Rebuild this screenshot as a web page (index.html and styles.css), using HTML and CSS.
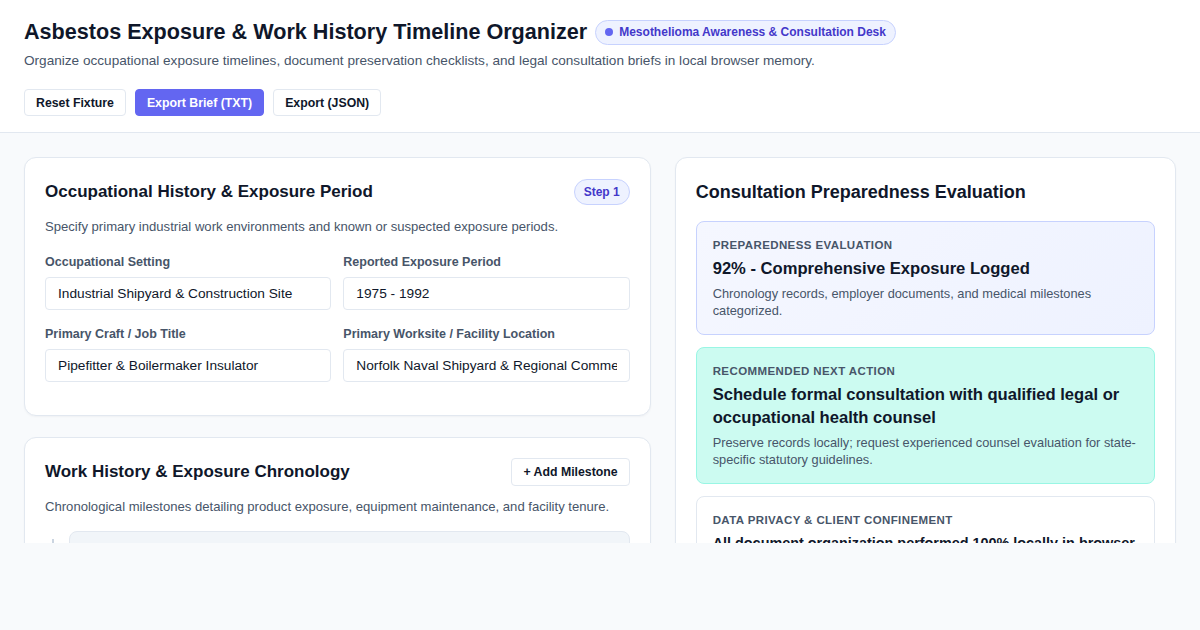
FILE: index.html
```html
<!DOCTYPE html>
<html lang="en">
<head>
    <meta charset="UTF-8">
    <meta name="viewport" content="width=device-width, initial-scale=1.0">
    <title>Asbestos Exposure &amp; Work History Timeline Organizer</title>
    <link rel="stylesheet" href="styles.css">
</head>
<body>
    <header class="app-header">
        <div class="title-row">
            <h1>Asbestos Exposure &amp; Work History Timeline Organizer</h1>
            <span class="desk-badge"><span class="dot"></span>Mesothelioma Awareness &amp; Consultation Desk</span>
        </div>
        <p class="subtitle">Organize occupational exposure timelines, document preservation checklists, and legal consultation briefs in local browser memory.</p>
        <div class="actions">
            <button type="button" class="btn">Reset Fixture</button>
            <button type="button" class="btn btn-primary">Export Brief (TXT)</button>
            <button type="button" class="btn">Export (JSON)</button>
        </div>
    </header>

    <main class="workspace">
        <div class="column">
            <section class="card">
                <div class="card-head">
                    <h2>Occupational History &amp; Exposure Period</h2>
                    <span class="step">Step 1</span>
                </div>
                <p class="card-desc">Specify primary industrial work environments and known or suspected exposure periods.</p>
                <div class="field-grid">
                    <div class="field">
                        <label for="setting">Occupational Setting</label>
                        <input type="text" id="setting" value="Industrial Shipyard &amp; Construction Site">
                    </div>
                    <div class="field">
                        <label for="period">Reported Exposure Period</label>
                        <input type="text" id="period" value="1975 - 1992">
                    </div>
                    <div class="field">
                        <label for="craft">Primary Craft / Job Title</label>
                        <input type="text" id="craft" value="Pipefitter &amp; Boilermaker Insulator">
                    </div>
                    <div class="field">
                        <label for="site">Primary Worksite / Facility Location</label>
                        <input type="text" id="site" value="Norfolk Naval Shipyard &amp; Regional Commercial Facilities">
                    </div>
                </div>
            </section>

            <section class="card">
                <div class="card-head">
                    <h2>Work History &amp; Exposure Chronology</h2>
                    <button type="button" class="btn btn-small">+ Add Milestone</button>
                </div>
                <p class="card-desc">Chronological milestones detailing product exposure, equipment maintenance, and facility tenure.</p>
                <div class="timeline">
                    <div class="milestone">
                        <div class="milestone-title">1975 - Shipyard apprenticeship begins</div>
                    </div>
                </div>
            </section>
        </div>

        <aside class="card">
            <h2 class="side-title">Consultation Preparedness Evaluation</h2>
            <div class="eval-box eval-score">
                <div class="eval-label">Preparedness Evaluation</div>
                <div class="eval-heading">92% - Comprehensive Exposure Logged</div>
                <p class="eval-text">Chronology records, employer documents, and medical milestones categorized.</p>
            </div>
            <div class="eval-box eval-action">
                <div class="eval-label">Recommended Next Action</div>
                <div class="eval-heading">Schedule formal consultation with qualified legal or occupational health counsel</div>
                <p class="eval-text">Preserve records locally; request experienced counsel evaluation for state-specific statutory guidelines.</p>
            </div>
            <div class="eval-box">
                <div class="eval-label">Data Privacy &amp; Client Confinement</div>
                <div class="eval-heading eval-heading-sm">All document organization performed 100% locally in browser</div>
                <p class="eval-text">No records leave this device.</p>
            </div>
        </aside>
    </main>
</body>
</html>
```

FILE: styles.css
```css
body {
    font-family: "Liberation Sans", Arial, sans-serif;
    background-color: #f8fafc;
    color: #0f172a;
    margin: 0;
    padding: 0;
}
.app-header {
    background-color: #fff;
    padding: 19px 24px 16px;
    border-bottom: 1px solid #e2e8f0;
}
.title-row {
    display: flex;
    align-items: center;
    gap: 8px;
}
h1 {
    margin: 0;
    font-size: 21.6px;
    line-height: 26px;
    color: #0f172a;
}
.desk-badge {
    display: inline-flex;
    align-items: center;
    gap: 6px;
    padding: 0 9px;
    height: 23px;
    font-size: 12px;
    font-weight: bold;
    color: #4338ca;
    background-color: #eef2ff;
    border: 1px solid #c7d2fe;
    border-radius: 999px;
}
.dot {
    width: 8px;
    height: 8px;
    border-radius: 50%;
    background-color: #6366f1;
}
.subtitle {
    margin: 6px 0 0;
    font-size: 13.6px;
    line-height: 20px;
    color: #475569;
}
.actions {
    display: flex;
    gap: 9px;
    margin-top: 18px;
}
.btn {
    height: 27px;
    padding: 0 11px;
    font-family: inherit;
    font-size: 12.3px;
    font-weight: bold;
    color: #0f172a;
    background-color: #fff;
    border: 1px solid #e2e8f0;
    border-radius: 4px;
    cursor: pointer;
}
.btn-primary {
    color: #fff;
    background-color: #6366f1;
    border-color: #6366f1;
}
.btn-small {
    height: 28px;
}
.workspace {
    display: grid;
    grid-template-columns: minmax(0, 1.25fr) minmax(0, 1fr);
    gap: 24px;
    align-items: start;
    padding: 24px;
    height: 410px;
    box-sizing: border-box;
    overflow: hidden;
}
.column {
    display: flex;
    flex-direction: column;
    gap: 21px;
}
.card {
    background-color: #fff;
    border: 1px solid #e2e8f0;
    border-radius: 12px;
    padding: 20px;
    box-shadow: 0 1px 2px rgba(15, 23, 42, 0.04);
}
.card-head {
    display: flex;
    align-items: center;
    justify-content: space-between;
    min-height: 28px;
}
h2 {
    margin: 0;
    font-size: 17px;
    line-height: 24px;
    color: #0f172a;
}
.step {
    padding: 5px 9px;
    font-size: 12px;
    font-weight: bold;
    color: #4338ca;
    background-color: #eef2ff;
    border: 1px solid #c7d2fe;
    border-radius: 999px;
}
.card-desc {
    margin: 12px 0 0;
    font-size: 13.1px;
    line-height: 18px;
    color: #475569;
}
.field-grid {
    display: grid;
    grid-template-columns: 1fr 1fr;
    gap: 16px 12px;
    margin: 18px 0 13px;
}
.field {
    display: flex;
    flex-direction: column;
    gap: 7px;
}
label {
    font-size: 12.5px;
    line-height: 16px;
    font-weight: bold;
    color: #475569;
}
input[type="text"] {
    height: 33px;
    padding: 0 12px;
    font-family: inherit;
    font-size: 13.7px;
    color: #0f172a;
    border: 1px solid #e2e8f0;
    border-radius: 4px;
    box-sizing: border-box;
    min-width: 0;
}
.timeline {
    margin-top: 15px;
    padding-left: 24px;
    background: linear-gradient(#cbd5e1, #cbd5e1) 7px 8px / 2px 100% no-repeat;
}
.milestone {
    background-color: #f1f5f9;
    border: 1px solid #e2e8f0;
    border-radius: 8px;
    padding: 14px 16px;
}
.milestone-title {
    font-size: 14px;
    font-weight: bold;
}
.side-title {
    font-size: 18px;
    line-height: 28px;
}
.eval-box {
    margin-top: 15px;
    padding: 16px 16px 15px;
    border: 1px solid #e2e8f0;
    border-radius: 8px;
}
.eval-box + .eval-box {
    margin-top: 12px;
}
.eval-score {
    background: linear-gradient(135deg, #f5f7ff, #eef2ff);
    border-color: #c7d2fe;
}
.eval-action {
    background-color: #ccfbf1;
    border-color: #99f6e4;
}
.eval-label {
    font-size: 11.5px;
    line-height: 14px;
    font-weight: bold;
    letter-spacing: 0.4px;
    text-transform: uppercase;
    color: #475569;
}
.eval-heading {
    margin-top: 5px;
    font-size: 16.6px;
    line-height: 23px;
    font-weight: bold;
    color: #0f172a;
}
.eval-heading-sm {
    font-size: 14.4px;
    white-space: nowrap;
}
.eval-text {
    margin: 5px 0 0;
    font-size: 12.8px;
    line-height: 17px;
    color: #475569;
}
```
